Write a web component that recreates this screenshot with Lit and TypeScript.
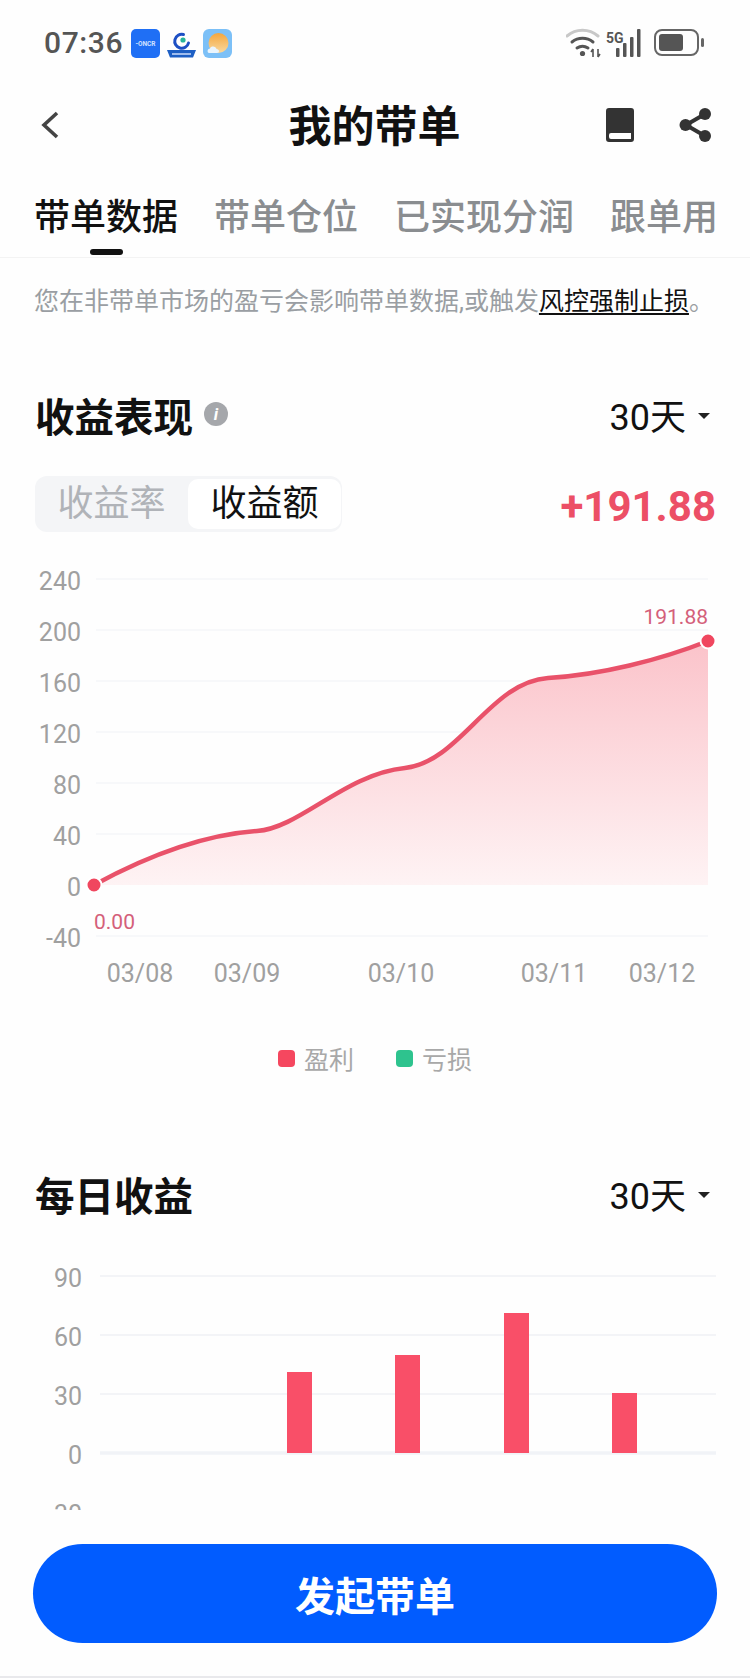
import { LitElement, css, html, svg } from "lit";
import { customElement, state } from "lit/decorators.js";

const TABS = ["带单数据", "带单仓位", "已实现分润", "跟单用"];

// line chart: coordinates are in page space, the viewBox starts at y=560
const LINE_TICKS = [240, 200, 160, 120, 80, 40, 0, -40];
const LINE_ZERO = 885;
const LINE_STEP = 51;
const LINE_DATES = [
  ["03/08", 140],
  ["03/09", 247],
  ["03/10", 401],
  ["03/11", 554],
  ["03/12", 662],
] as const;
const CURVE =
  "M94 885C140 860 200 835 257 831C300 828 345 774 405 768C460 762 490 682 548 678C600 675 660 660 708 641";

// bar chart: viewBox starts at y=1226
const BAR_TICKS = [90, 60, 30, 0, -30];
const BAR_ZERO = 1453;
const BAR_STEP = 59;
const BARS = [
  { x: 287, top: 1372 },
  { x: 395, top: 1355 },
  { x: 504, top: 1313 },
  { x: 612, top: 1393 },
];

@customElement("period-select")
export class PeriodSelect extends LitElement {
  static styles = css`
    :host {
      display: flex;
      align-items: center;
      gap: 12px;
      font-size: 36px;
      color: #111;
    }
    .caret {
      width: 0;
      height: 0;
      border-left: 6px solid transparent;
      border-right: 6px solid transparent;
      border-top: 6px solid #222;
      margin-top: 4px;
    }
  `;

  render() {
    return html`<span>30天</span><span class="caret"></span>`;
  }
}

@customElement("app-root")
export class AppRoot extends LitElement {
  static styles = css`
    :host {
      display: block;
      width: 750px;
      height: 1678px;
      overflow: hidden;
      background: #fefefe;
      font-family: Roboto, "Noto Sans CJK SC", sans-serif;
    }

    .scroll {
      height: 1510px;
      overflow: hidden;
    }

    .status {
      height: 85px;
      display: flex;
      align-items: center;
      padding: 0 44px;
      box-sizing: border-box;
    }
    .time {
      font-size: 30px;
      font-weight: 500;
      letter-spacing: 0.6px;
      color: #555;
      margin-right: 8px;
    }
    .apps {
      display: flex;
      gap: 7px;
      margin-top: 2px;
    }
    .app-logo {
      display: block;
      width: 29px;
      height: 29px;
    }
    .sys {
      margin-left: auto;
      margin-right: -1px;
      display: block;
    }

    .nav {
      height: 80px;
      display: grid;
      grid-template-columns: 1fr auto 1fr;
      align-items: center;
      padding: 0 38px 0 37px;
    }
    .back {
      margin-left: 4px;
    }
    .title {
      padding-bottom: 4px;
      font-size: 43px;
      font-weight: 700;
      color: #111;
    }
    .nav-actions {
      justify-self: end;
      display: flex;
      align-items: center;
      gap: 45px;
    }

    .tabs {
      height: 93px;
      box-sizing: border-box;
      padding: 30px 0 0 34px;
      display: flex;
      gap: 36px;
      border-bottom: 1px solid #f3f3f3;
      white-space: nowrap;
      font-size: 36px;
      line-height: 46px;
      color: #8a8d90;
      position: relative;
    }
    .tabs span {
      flex: none;
      font-weight: 500;
    }
    .tabs .on {
      color: #111;
    }
    .ink {
      position: absolute;
      left: 90px;
      bottom: 2px;
      width: 33px;
      height: 6px;
      border-radius: 3px;
      background: #111;
    }

    .note {
      height: 82px;
      padding-left: 34px;
      display: flex;
      align-items: center;
      font-size: 25px;
      color: #9a9ea3;
      white-space: nowrap;
    }
    .note u {
      color: #111;
      text-underline-offset: 3px;
    }

    .head {
      height: 60px;
      margin-top: 44px;
      padding: 0 40px 0 35px;
      display: flex;
      align-items: center;
      justify-content: space-between;
    }
    .head h2 {
      margin: 0;
      font-size: 39.5px;
      font-weight: 700;
      color: #111;
      display: flex;
      align-items: center;
      gap: 11px;
    }

    .figures {
      height: 56px;
      margin-top: 32px;
      padding: 0 34px 0 35px;
      display: flex;
      align-items: center;
      justify-content: space-between;
    }
    .segment {
      width: 307px;
      height: 56px;
      box-sizing: border-box;
      padding: 3px 1px 3px 0;
      border-radius: 12px;
      background: #f4f5f7;
      display: grid;
      grid-template-columns: 153px 153px;
      font-size: 36px;
      line-height: 50px;
      text-align: center;
      color: #b0b3b8;
    }
    .segment .on {
      background: #fff;
      border-radius: 10px;
      color: #111;
    }
    .total {
      padding-top: 4px;
      font-size: 42px;
      font-weight: 700;
      color: #ec4f66;
    }

    .chart {
      display: block;
      margin-top: 28px;
    }
    .chart-bars {
      margin-top: 3px;
    }
    .grid {
      stroke: #f5f6f8;
      stroke-width: 1.5;
    }
    .chart-bars .grid {
      stroke: #f3f4f7;
      stroke-width: 2;
    }
    .grid-bold {
      stroke: #f1f3f7;
      stroke-width: 3.5;
    }
    .axis {
      font-size: 25px;
      fill: #a0a0a0;
    }
    .value {
      font-size: 21px;
      fill: #d4607a;
    }

    .legend {
      height: 116px;
      display: flex;
      align-items: center;
      padding-left: 278px;
      font-size: 25px;
      color: #a8a8a8;
    }
    .swatch {
      width: 17px;
      height: 17px;
      border-radius: 4px;
      margin-right: 9px;
    }
    .legend span:nth-child(2) {
      margin-right: 42px;
    }
    .profit {
      background: #f5475f;
    }
    .loss {
      background: #2ec38e;
    }

    .second {
      margin-top: 47px;
    }

    .footer {
      height: 168px;
      box-sizing: border-box;
      padding: 34px 33px 0;
      border-bottom: 2px solid #e9e9ec;
    }
    .cta {
      height: 99px;
      border-radius: 50px;
      background: #015cff;
      color: #fff;
      display: flex;
      align-items: center;
      justify-content: center;
      font-size: 40px;
      font-weight: 700;
    }
  `;

  @state() private active = 0;

  private appLogos() {
    return html`<div class="apps">
      <svg class="app-logo" viewBox="0 0 29 29">
        <rect width="29" height="29" rx="5" fill="#1f6ff5" />
        <text x="14.5" y="17" text-anchor="middle" font-size="6.5" font-weight="700" fill="#cfe0ff">-ONCR</text>
      </svg>
      <svg class="app-logo" viewBox="0 0 29 29">
        <path d="M16.5 5.5A7 7 0 1 0 21.5 14" fill="none" stroke="#1d4fc4" stroke-width="3" stroke-linecap="round" />
        <circle cx="16" cy="11" r="2.6" fill="#27b59a" />
        <path d="M0 21H29L26 28.5H3Z" fill="#1d5fc4" />
        <path d="M5 25H24" stroke="#d8e6ff" stroke-width="1.4" />
      </svg>
      <svg class="app-logo" viewBox="0 0 29 29">
        <defs>
          <linearGradient id="sun" x1="0" y1="0" x2="0" y2="1">
            <stop offset="0" stop-color="#f4a63c" />
            <stop offset="1" stop-color="#f8d9a0" />
          </linearGradient>
        </defs>
        <rect width="29" height="29" rx="6" fill="#7cc0f7" />
        <circle cx="15.5" cy="14" r="10" fill="url(#sun)" />
        <path d="M6 24C4 24 4 19.5 7 19.5C8 16.5 13 17 13.5 20C16.5 20 17 24 14 24Z" fill="#eaf5fd" />
      </svg>
    </div>`;
  }

  private sysIcons() {
    return svg`<svg class="sys" width="141" height="30" viewBox="0 0 141 30">
      <path d="M1 8A24 24 0 0 1 32 8" fill="none" stroke="#c8c8c8" stroke-width="3" stroke-linecap="round" />
      <path d="M6 14A17 17 0 0 1 27 14" fill="none" stroke="#555" stroke-width="3" stroke-linecap="round" />
      <path d="M11 20A10 10 0 0 1 22 20" fill="none" stroke="#555" stroke-width="3" stroke-linecap="round" />
      <circle cx="16.5" cy="25.5" r="2.6" fill="#555" />
      <path d="M27 21V29M27 21L25 24M32 21V29M32 29L34 26" fill="none" stroke="#555" stroke-width="1.6" />
      <text x="40" y="15" font-size="14" font-weight="700" fill="#555">5G</text>
      <g fill="#555">
        <rect x="50" y="20" width="3.5" height="9" rx="1" />
        <rect x="57" y="15" width="3.5" height="14" rx="1" />
        <rect x="64" y="9" width="3.5" height="20" rx="1" />
        <rect x="71" y="1" width="3.5" height="28" rx="1" />
      </g>
      <rect x="89" y="2" width="43" height="25" rx="7" fill="none" stroke="#666" stroke-width="2" />
      <rect x="93" y="6" width="24" height="17" rx="3" fill="#555" />
      <rect x="135" y="10" width="3" height="9" rx="1.5" fill="#666" />
    </svg>`;
  }

  private lineChart() {
    const area = `${CURVE}L708 885L94 885Z`;
    return svg`<svg class="chart" width="750" height="440" viewBox="0 560 750 440">
      <defs>
        <linearGradient id="area" gradientUnits="userSpaceOnUse" x1="0" y1="641" x2="0" y2="885">
          <stop offset="0" stop-color="#fbc3ca" />
          <stop offset="1" stop-color="#fef3f4" />
        </linearGradient>
      </defs>
      ${LINE_TICKS.map((t, i) => {
        const y = LINE_ZERO + (i - 6) * LINE_STEP;
        return svg`
          ${t === 0 ? null : svg`<line class="grid" x1="96" x2="708" y1=${y} y2=${y}></line>`}
          <text class="axis" x="81" y=${y + 11} text-anchor="end">${t}</text>`;
      })}
      <path d=${area} fill="url(#area)" />
      <path d=${CURVE} fill="none" stroke="#e9526a" stroke-width="4.5" stroke-linecap="round" />
      <circle cx="94" cy="885" r="7.5" fill="#f0475f" stroke="#fff" stroke-width="2" />
      <circle cx="708" cy="641" r="7.5" fill="#f0475f" stroke="#fff" stroke-width="2" />
      <text class="value" x="708" y="624" text-anchor="end">191.88</text>
      <text class="value" x="94" y="929">0.00</text>
      ${LINE_DATES.map(([d, x]) => svg`<text class="axis" x=${x} y="982" text-anchor="middle">${d}</text>`)}
    </svg>`;
  }

  private barChart() {
    return svg`<svg class="chart chart-bars" width="750" height="284" viewBox="0 1226 750 284">
      ${BAR_TICKS.map((t, i) => {
        const y = BAR_ZERO + (i - 3) * BAR_STEP;
        return svg`
          ${t < 0 ? null : svg`<line class=${t === 0 ? "grid-bold" : "grid"} x1="100" x2="716" y1=${y} y2=${y}></line>`}
          <text class="axis" x="82" y=${y + 11} text-anchor="end">${t}</text>`;
      })}
      ${BARS.map((b) => svg`<rect x=${b.x} y=${b.top} width="25" height=${BAR_ZERO - b.top} fill="#f94f68"></rect>`)}
    </svg>`;
  }

  render() {
    return html`
      <div class="scroll">
        <div class="status">
          <span class="time">07:36</span>
          ${this.appLogos()} ${this.sysIcons()}
        </div>

        <div class="nav">
          <svg class="back" width="18" height="28" viewBox="0 0 18 28">
            <path d="M16 2L3 14L16 26" fill="none" stroke="#444" stroke-width="3.6" />
          </svg>
          <span class="title">我的带单</span>
          <div class="nav-actions">
            <svg width="28" height="34" viewBox="0 0 28 34">
              <path
                d="M3 0H25A3 3 0 0 1 28 3V31A3 3 0 0 1 25 34H3A3 3 0 0 1 0 31V3A3 3 0 0 1 3 0ZM5 25A2 2 0 0 0 3 27V29A2 2 0 0 0 5 31H25V25Z"
                fill="#333"
                fill-rule="evenodd"
              />
            </svg>
            <svg width="33" height="34" viewBox="0 0 33 34">
              <path d="M26 6L7 17L26 28" fill="none" stroke="#333" stroke-width="4" />
              <circle cx="26" cy="6" r="6" fill="#333" />
              <circle cx="6.5" cy="17" r="6" fill="#333" />
              <circle cx="26" cy="28" r="6" fill="#333" />
            </svg>
          </div>
        </div>

        <div class="tabs">
          ${TABS.map((t, i) => html`<span class=${i === this.active ? "on" : ""}>${t}</span>`)}
          <i class="ink"></i>
        </div>

        <div class="note">您在非带单市场的盈亏会影响带单数据,或触发<u>风控强制止损</u>。</div>

        <div class="head">
          <h2>
            收益表现
            <svg width="24" height="24" viewBox="0 0 24 24">
              <circle cx="12" cy="12" r="12" fill="#a5a7ab" />
              <text x="12" y="18" text-anchor="middle" font-size="17" font-weight="700" font-style="italic" fill="#fff">i</text>
            </svg>
          </h2>
          <period-select></period-select>
        </div>

        <div class="figures">
          <div class="segment"><span>收益率</span><span class="on">收益额</span></div>
          <span class="total">+191.88</span>
        </div>

        ${this.lineChart()}

        <div class="legend">
          <span class="swatch profit"></span><span>盈利</span>
          <span class="swatch loss"></span><span>亏损</span>
        </div>

        <div class="head second">
          <h2>每日收益</h2>
          <period-select></period-select>
        </div>

        ${this.barChart()}
      </div>

      <div class="footer"><div class="cta">发起带单</div></div>
    `;
  }
}
